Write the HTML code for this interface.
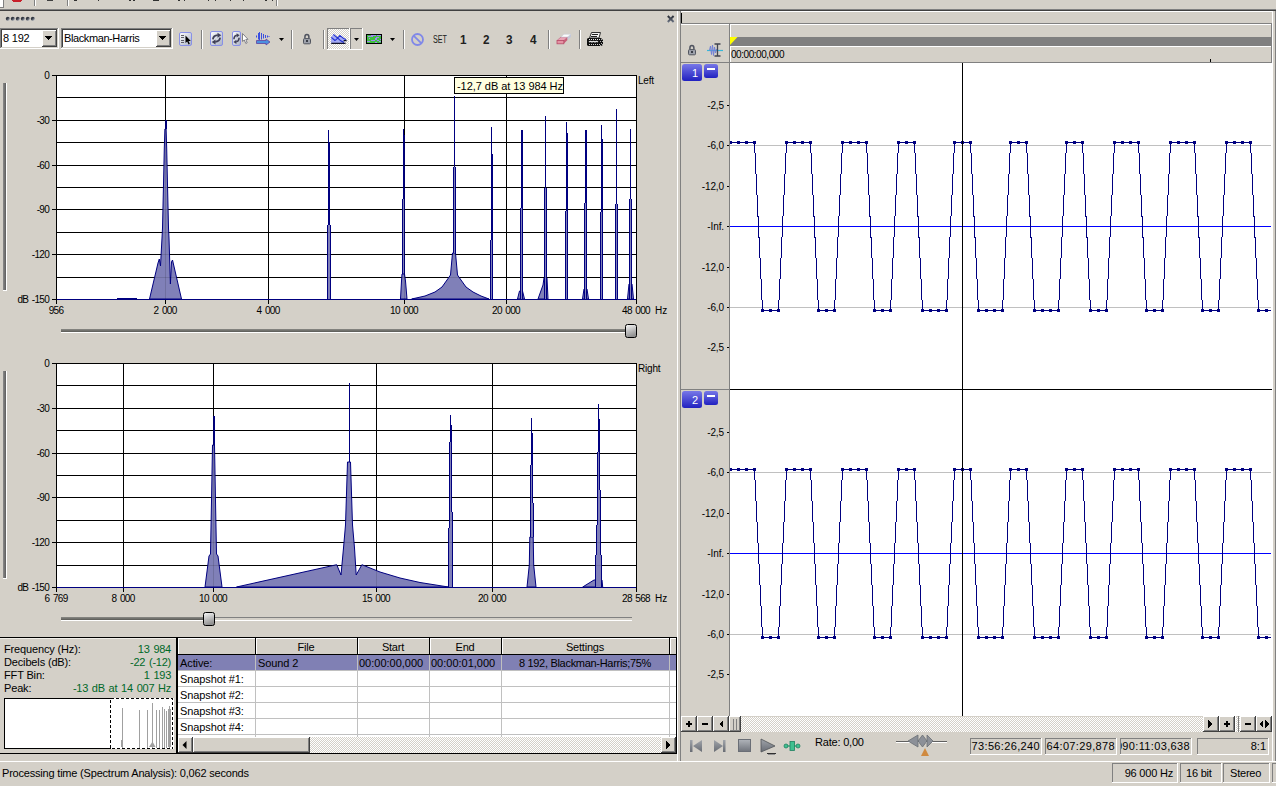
<!DOCTYPE html>
<html><head><meta charset="utf-8"><style>
*{margin:0;padding:0;box-sizing:border-box}
html,body{width:1276px;height:786px;overflow:hidden;background:#d4d0c8;font-family:"Liberation Sans",sans-serif;font-size:11px;color:#000}
.t{position:absolute;white-space:nowrap;line-height:13px}
svg{position:absolute;left:0;top:0}
</style></head><body>
<svg width="1276" height="786" viewBox="0 0 1276 786" shape-rendering="crispEdges">
<defs><linearGradient id="vbarg" x1="0" x2="1" y1="0" y2="0"><stop offset="0" stop-color="#8a8a8a"/><stop offset="1" stop-color="#5e5e5e"/></linearGradient><linearGradient id="trackg" x1="0" x2="0" y1="0" y2="1"><stop offset="0" stop-color="#8a8a86"/><stop offset="1" stop-color="#5a5a56"/></linearGradient><linearGradient id="thumbg" x1="0" x2="0.3" y1="0" y2="1"><stop offset="0" stop-color="#fafafa"/><stop offset="1" stop-color="#909090"/></linearGradient><linearGradient id="chbtn" x1="0" x2="0" y1="0" y2="1"><stop offset="0" stop-color="#7878e8"/><stop offset="1" stop-color="#2020c0"/></linearGradient><pattern id="checker" width="2" height="2" patternUnits="userSpaceOnUse"><rect width="2" height="2" fill="#d4d0c8"/><rect width="1" height="1" fill="#fff"/><rect x="1" y="1" width="1" height="1" fill="#fff"/></pattern><linearGradient id="iconbg" x1="0" x2="1" y1="0" y2="1"><stop offset="0" stop-color="#fff"/><stop offset="1" stop-color="#a8b0c4"/></linearGradient><linearGradient id="tg" x1="0" x2="0" y1="0" y2="1"><stop offset="0" stop-color="#a0a4aa"/><stop offset="1" stop-color="#686c74"/></linearGradient><linearGradient id="tg2" x1="0" x2="0" y1="0" y2="1"><stop offset="0" stop-color="#b0b4ba"/><stop offset="1" stop-color="#70747c"/></linearGradient><linearGradient id="xg" x1="0" x2="0" y1="0" y2="1"><stop offset="0" stop-color="#2a2e36"/><stop offset="1" stop-color="#687080"/></linearGradient><linearGradient id="dotg" x1="0" y1="0" x2="1" y2="1"><stop offset="0" stop-color="#20242c"/><stop offset="0.45" stop-color="#3a404c"/><stop offset="1" stop-color="#c8d0dc"/></linearGradient></defs>
<rect x="0" y="0" width="3" height="7" fill="#fff" />
<rect x="0" y="7" width="4" height="1" fill="#808080" />
<rect x="3" y="0" width="1" height="8" fill="#808080" />
<path d="M12 0 L22 0 L21 2 L13 2 Z" fill="#c8202a"/>
<rect x="34" y="0" width="1" height="6" fill="#808080" />
<rect x="35" y="0" width="1" height="6" fill="#fff" />
<rect x="67" y="0" width="1" height="6" fill="#808080" />
<rect x="68" y="0" width="1" height="6" fill="#fff" />
<rect x="276" y="0" width="1" height="6" fill="#808080" />
<rect x="277" y="0" width="1" height="6" fill="#fff" />
<rect x="47" y="0" width="6" height="1" fill="#404040"/>
<rect x="74" y="0" width="2" height="1" fill="#303030" />
<rect x="76" y="0" width="1" height="1" fill="#303030" />
<rect x="98" y="0" width="1" height="1" fill="#303030" />
<rect x="129" y="0" width="2" height="1" fill="#303030" />
<rect x="133" y="0" width="2" height="1" fill="#303030" />
<rect x="153" y="0" width="6" height="1" fill="#303030" />
<rect x="178" y="0" width="2" height="1" fill="#303030" />
<rect x="184" y="0" width="1" height="1" fill="#303030" />
<rect x="208" y="0" width="1" height="1" fill="#303030" />
<rect x="215" y="0" width="1" height="1" fill="#303030" />
<rect x="230" y="0" width="1" height="1" fill="#303030" />
<rect x="243" y="0" width="1" height="1" fill="#303030" />
<rect x="265" y="0" width="2" height="1" fill="#303030" />
<rect x="272" y="0" width="1" height="1" fill="#303030" />
<rect x="0" y="9" width="1276" height="1" fill="#808080" />
<rect x="0" y="10" width="1276" height="1" fill="#404040" />
<circle cx="7.8" cy="18.8" r="2" fill="url(#dotg)" shape-rendering="auto"/>
<circle cx="12.8" cy="18.8" r="2" fill="url(#dotg)" shape-rendering="auto"/>
<circle cx="17.8" cy="18.8" r="2" fill="url(#dotg)" shape-rendering="auto"/>
<circle cx="22.8" cy="18.8" r="2" fill="url(#dotg)" shape-rendering="auto"/>
<circle cx="27.8" cy="18.8" r="2" fill="url(#dotg)" shape-rendering="auto"/>
<circle cx="32.8" cy="18.8" r="2" fill="url(#dotg)" shape-rendering="auto"/>
<path d="M667.8 16 L673.6 22 M673.6 16 L667.8 22" stroke="url(#xg)" stroke-width="1.9" shape-rendering="auto"/>
<rect x="0" y="28" width="59" height="21" fill="#fff" />
<rect x="0" y="28" width="59" height="1" fill="#808080" />
<rect x="0" y="28" width="1" height="21" fill="#808080" />
<rect x="1" y="29" width="57" height="1" fill="#404040" />
<rect x="1" y="29" width="1" height="19" fill="#404040" />
<rect x="0" y="48" width="59" height="1" fill="#fff" />
<rect x="58" y="28" width="1" height="21" fill="#fff" />
<rect x="1" y="47" width="57" height="1" fill="#d4d0c8" />
<rect x="57" y="29" width="1" height="19" fill="#d4d0c8" />
<rect x="42" y="30" width="15" height="17" fill="#d4d0c8" />
<rect x="42" y="30" width="15" height="1" fill="#fff" />
<rect x="42" y="30" width="1" height="17" fill="#fff" />
<rect x="42" y="46" width="15" height="1" fill="#404040" />
<rect x="56" y="30" width="1" height="17" fill="#404040" />
<rect x="43" y="45" width="13" height="1" fill="#808080" />
<rect x="55" y="31" width="1" height="15" fill="#808080" />
<path d="M45 36 L52 36 L48.5 40 Z" fill="#000"/>
<rect x="61" y="28" width="112" height="21" fill="#fff" />
<rect x="61" y="28" width="112" height="1" fill="#808080" />
<rect x="61" y="28" width="1" height="21" fill="#808080" />
<rect x="62" y="29" width="110" height="1" fill="#404040" />
<rect x="62" y="29" width="1" height="19" fill="#404040" />
<rect x="61" y="48" width="112" height="1" fill="#fff" />
<rect x="172" y="28" width="1" height="21" fill="#fff" />
<rect x="62" y="47" width="110" height="1" fill="#d4d0c8" />
<rect x="171" y="29" width="1" height="19" fill="#d4d0c8" />
<rect x="156" y="30" width="15" height="17" fill="#d4d0c8" />
<rect x="156" y="30" width="15" height="1" fill="#fff" />
<rect x="156" y="30" width="1" height="17" fill="#fff" />
<rect x="156" y="46" width="15" height="1" fill="#404040" />
<rect x="170" y="30" width="1" height="17" fill="#404040" />
<rect x="157" y="45" width="13" height="1" fill="#808080" />
<rect x="169" y="31" width="1" height="15" fill="#808080" />
<path d="M159 36 L166 36 L162.5 40 Z" fill="#000"/>
<rect x="201" y="30" width="1" height="19" fill="#808080" />
<rect x="202" y="30" width="1" height="19" fill="#fff" />
<rect x="291" y="30" width="1" height="19" fill="#808080" />
<rect x="292" y="30" width="1" height="19" fill="#fff" />
<rect x="323" y="30" width="1" height="19" fill="#808080" />
<rect x="324" y="30" width="1" height="19" fill="#fff" />
<rect x="403" y="30" width="1" height="19" fill="#808080" />
<rect x="404" y="30" width="1" height="19" fill="#fff" />
<rect x="548" y="30" width="1" height="19" fill="#808080" />
<rect x="549" y="30" width="1" height="19" fill="#fff" />
<rect x="579" y="30" width="1" height="19" fill="#808080" />
<rect x="580" y="30" width="1" height="19" fill="#fff" />
<rect x="56" y="75" width="580" height="224" fill="#fff" />
<rect x="56" y="97" width="580" height="1" fill="#000" />
<rect x="56" y="120" width="580" height="1" fill="#000" />
<rect x="56" y="142" width="580" height="1" fill="#000" />
<rect x="56" y="165" width="580" height="1" fill="#000" />
<rect x="56" y="187" width="580" height="1" fill="#000" />
<rect x="56" y="209" width="580" height="1" fill="#000" />
<rect x="56" y="232" width="580" height="1" fill="#000" />
<rect x="56" y="254" width="580" height="1" fill="#000" />
<rect x="56" y="277" width="580" height="1" fill="#000" />
<rect x="165" y="75" width="1" height="224" fill="#000" />
<rect x="268" y="75" width="1" height="224" fill="#000" />
<rect x="404" y="75" width="1" height="224" fill="#000" />
<rect x="506" y="75" width="1" height="224" fill="#000" />
<polygon points="149.5,299.0 158.0,263.0 159.3,259.0 160.5,266.0 162.0,238.0 162.5,228.0 163.8,171.0 164.3,148.0 164.9,129.0 166.1,129.0 166.7,148.0 167.2,171.0 168.5,228.0 169.0,238.0 170.4,284.0 171.5,262.0 172.5,260.0 181.5,299.0" fill="#8080b8" stroke="#000080" stroke-width="1" shape-rendering="auto"/>
<rect x="165" y="120" width="2" height="9" fill="#000080" />
<rect x="165" y="120" width="2" height="1" fill="#000080" />
<rect x="328" y="130" width="1" height="12" fill="#000080" />
<rect x="328" y="130" width="1" height="1" fill="#000080" />
<rect x="328" y="142" width="2" height="83" fill="#000080" />
<rect x="329" y="142" width="1" height="1" fill="#000080" />
<rect x="327" y="225" width="4" height="74" fill="#8080b8" />
<rect x="327" y="225" width="1" height="74" fill="#000080" />
<rect x="330" y="225" width="1" height="74" fill="#000080" />
<rect x="327" y="225" width="1" height="1" fill="#000080" />
<rect x="330" y="225" width="1" height="1" fill="#000080" />
<rect x="403" y="129" width="1" height="6" fill="#000080" />
<rect x="403" y="129" width="1" height="1" fill="#000080" />
<rect x="403" y="135" width="2" height="64" fill="#000080" />
<rect x="404" y="135" width="1" height="1" fill="#000080" />
<rect x="402" y="199" width="3" height="75" fill="#8080b8" />
<rect x="402" y="199" width="1" height="75" fill="#000080" />
<rect x="404" y="199" width="1" height="75" fill="#000080" />
<rect x="402" y="199" width="1" height="1" fill="#000080" />
<polygon points="400.5,299.0 401.5,281.0 402.0,274.0 404.5,274.0 405.5,281.0 407.0,299.0" fill="#8080b8" stroke="#000080" stroke-width="1" shape-rendering="auto"/>
<polygon points="411.7,299.0 425.0,296.0 435.0,292.0 442.0,287.0 447.0,280.0 450.5,275.0 452.5,253.0 455.5,253.0 457.5,275.0 461.0,280.0 466.0,287.0 473.0,292.0 481.0,296.0 489.0,299.0" fill="#8080b8" stroke="#000080" stroke-width="1" shape-rendering="auto"/>
<rect x="454" y="96" width="1" height="71" fill="#000080" />
<rect x="454" y="96" width="1" height="1" fill="#000080" />
<rect x="453" y="167" width="3" height="86" fill="#8080b8" />
<rect x="453" y="167" width="1" height="86" fill="#000080" />
<rect x="455" y="167" width="1" height="86" fill="#000080" />
<rect x="453" y="167" width="1" height="1" fill="#000080" />
<rect x="455" y="167" width="1" height="1" fill="#000080" />
<rect x="491" y="127" width="1" height="27" fill="#000080" />
<rect x="491" y="127" width="1" height="1" fill="#000080" />
<rect x="491" y="154" width="2" height="86" fill="#000080" />
<rect x="492" y="154" width="1" height="1" fill="#000080" />
<rect x="490" y="240" width="3" height="59" fill="#8080b8" />
<rect x="490" y="240" width="1" height="59" fill="#000080" />
<rect x="492" y="240" width="1" height="59" fill="#000080" />
<rect x="490" y="240" width="1" height="1" fill="#000080" />
<polygon points="517.5,299.0 519.5,291.0 522.5,291.0 524.5,299.0" fill="#8080b8" stroke="#000080" stroke-width="1" shape-rendering="auto"/>
<rect x="521" y="130" width="2" height="78" fill="#000080" />
<rect x="521" y="130" width="2" height="1" fill="#000080" />
<rect x="520" y="208" width="3" height="91" fill="#8080b8" />
<rect x="520" y="208" width="1" height="91" fill="#000080" />
<rect x="522" y="208" width="1" height="91" fill="#000080" />
<rect x="520" y="208" width="1" height="1" fill="#000080" />
<polygon points="538.0,299.0 543.0,285.0 544.0,278.0 547.0,278.0 548.0,299.0" fill="#8080b8" stroke="#000080" stroke-width="1" shape-rendering="auto"/>
<rect x="545" y="116" width="1" height="72" fill="#000080" />
<rect x="545" y="116" width="1" height="1" fill="#000080" />
<rect x="544" y="188" width="3" height="90" fill="#8080b8" />
<rect x="544" y="188" width="1" height="90" fill="#000080" />
<rect x="546" y="188" width="1" height="90" fill="#000080" />
<rect x="544" y="188" width="1" height="1" fill="#000080" />
<rect x="546" y="188" width="1" height="1" fill="#000080" />
<rect x="544" y="278" width="3" height="21" fill="#8080b8" />
<rect x="544" y="278" width="1" height="21" fill="#000080" />
<rect x="546" y="278" width="1" height="21" fill="#000080" />
<rect x="566" y="122" width="1" height="11" fill="#000080" />
<rect x="566" y="122" width="1" height="1" fill="#000080" />
<rect x="566" y="133" width="2" height="78" fill="#000080" />
<rect x="567" y="133" width="1" height="1" fill="#000080" />
<rect x="565" y="211" width="3" height="88" fill="#8080b8" />
<rect x="565" y="211" width="1" height="88" fill="#000080" />
<rect x="567" y="211" width="1" height="88" fill="#000080" />
<rect x="565" y="211" width="1" height="1" fill="#000080" />
<polygon points="582.5,299.0 584.0,289.0 587.0,289.0 588.5,299.0" fill="#8080b8" stroke="#000080" stroke-width="1" shape-rendering="auto"/>
<rect x="585" y="130" width="2" height="73" fill="#000080" />
<rect x="585" y="130" width="2" height="1" fill="#000080" />
<rect x="584" y="203" width="3" height="96" fill="#8080b8" />
<rect x="584" y="203" width="1" height="96" fill="#000080" />
<rect x="586" y="203" width="1" height="96" fill="#000080" />
<rect x="584" y="203" width="1" height="1" fill="#000080" />
<rect x="601" y="125" width="1" height="14" fill="#000080" />
<rect x="601" y="125" width="1" height="1" fill="#000080" />
<rect x="601" y="139" width="2" height="73" fill="#000080" />
<rect x="602" y="139" width="1" height="1" fill="#000080" />
<rect x="600" y="212" width="3" height="87" fill="#8080b8" />
<rect x="600" y="212" width="1" height="87" fill="#000080" />
<rect x="602" y="212" width="1" height="87" fill="#000080" />
<rect x="600" y="212" width="1" height="1" fill="#000080" />
<rect x="616" y="109" width="1" height="95" fill="#000080" />
<rect x="616" y="109" width="1" height="1" fill="#000080" />
<rect x="615" y="204" width="3" height="95" fill="#8080b8" />
<rect x="615" y="204" width="1" height="95" fill="#000080" />
<rect x="617" y="204" width="1" height="95" fill="#000080" />
<rect x="615" y="204" width="1" height="1" fill="#000080" />
<rect x="617" y="204" width="1" height="1" fill="#000080" />
<polygon points="627.5,299.0 629.0,284.0 632.0,284.0 633.5,299.0" fill="#8080b8" stroke="#000080" stroke-width="1" shape-rendering="auto"/>
<rect x="630" y="129" width="1" height="70" fill="#000080" />
<rect x="630" y="129" width="1" height="1" fill="#000080" />
<rect x="629" y="199" width="3" height="100" fill="#8080b8" />
<rect x="629" y="199" width="1" height="100" fill="#000080" />
<rect x="631" y="199" width="1" height="100" fill="#000080" />
<rect x="629" y="199" width="1" height="1" fill="#000080" />
<rect x="631" y="199" width="1" height="1" fill="#000080" />
<rect x="117" y="298" width="20" height="1" fill="#000080" />
<rect x="56" y="97" width="580" height="1" fill="#000" fill-opacity="0.13"/>
<rect x="56" y="120" width="580" height="1" fill="#000" fill-opacity="0.13"/>
<rect x="56" y="142" width="580" height="1" fill="#000" fill-opacity="0.13"/>
<rect x="56" y="165" width="580" height="1" fill="#000" fill-opacity="0.13"/>
<rect x="56" y="187" width="580" height="1" fill="#000" fill-opacity="0.13"/>
<rect x="56" y="209" width="580" height="1" fill="#000" fill-opacity="0.13"/>
<rect x="56" y="232" width="580" height="1" fill="#000" fill-opacity="0.13"/>
<rect x="56" y="254" width="580" height="1" fill="#000" fill-opacity="0.13"/>
<rect x="56" y="277" width="580" height="1" fill="#000" fill-opacity="0.13"/>
<rect x="165" y="75" width="1" height="224" fill="#000" fill-opacity="0.13"/>
<rect x="268" y="75" width="1" height="224" fill="#000" fill-opacity="0.13"/>
<rect x="404" y="75" width="1" height="224" fill="#000" fill-opacity="0.13"/>
<rect x="506" y="75" width="1" height="224" fill="#000" fill-opacity="0.13"/>
<rect x="56" y="75" width="581" height="1" fill="#000" />
<rect x="56" y="75" width="1" height="229" fill="#000" />
<rect x="636" y="75" width="1" height="229" fill="#000" />
<rect x="57" y="299" width="579" height="1" fill="#000080" />
<rect x="165" y="300" width="1" height="4" fill="#000" />
<rect x="268" y="300" width="1" height="4" fill="#000" />
<rect x="404" y="300" width="1" height="4" fill="#000" />
<rect x="506" y="300" width="1" height="4" fill="#000" />
<rect x="52" y="75" width="4" height="1" fill="#000" />
<rect x="52" y="120" width="4" height="1" fill="#000" />
<rect x="52" y="165" width="4" height="1" fill="#000" />
<rect x="52" y="209" width="4" height="1" fill="#000" />
<rect x="52" y="254" width="4" height="1" fill="#000" />
<rect x="52" y="299" width="4" height="1" fill="#000" />
<rect x="56" y="363" width="580" height="224" fill="#fff" />
<rect x="56" y="385" width="580" height="1" fill="#000" />
<rect x="56" y="408" width="580" height="1" fill="#000" />
<rect x="56" y="430" width="580" height="1" fill="#000" />
<rect x="56" y="453" width="580" height="1" fill="#000" />
<rect x="56" y="475" width="580" height="1" fill="#000" />
<rect x="56" y="497" width="580" height="1" fill="#000" />
<rect x="56" y="520" width="580" height="1" fill="#000" />
<rect x="56" y="542" width="580" height="1" fill="#000" />
<rect x="56" y="565" width="580" height="1" fill="#000" />
<rect x="123" y="363" width="1" height="224" fill="#000" />
<rect x="213" y="363" width="1" height="224" fill="#000" />
<rect x="376" y="363" width="1" height="224" fill="#000" />
<rect x="492" y="363" width="1" height="224" fill="#000" />
<polygon points="205.0,587.0 209.0,556.0 210.5,554.0 211.5,501.0 212.5,445.0 214.5,445.0 215.5,501.0 216.5,554.0 218.0,556.0 222.0,587.0" fill="#8080b8" stroke="#000080" stroke-width="1" shape-rendering="auto"/>
<rect x="213" y="416" width="2" height="29" fill="#000080" />
<rect x="213" y="416" width="2" height="1" fill="#000080" />
<polygon points="236.5,587.0 336.7,564.7 341.0,575.0 343.5,548.0 345.5,525.0 347.5,462.0 350.5,462.0 352.5,525.0 354.5,548.0 356.2,575.0 361.9,564.7 380.0,572.0 400.0,578.0 420.0,582.5 448.4,587.0" fill="#8080b8" stroke="#000080" stroke-width="1" shape-rendering="auto"/>
<rect x="349" y="383" width="1" height="79" fill="#000080" />
<rect x="349" y="383" width="1" height="1" fill="#000080" />
<rect x="450" y="415" width="1" height="10" fill="#000080" />
<rect x="450" y="415" width="1" height="1" fill="#000080" />
<rect x="450" y="425" width="2" height="17" fill="#000080" />
<rect x="451" y="425" width="1" height="1" fill="#000080" />
<rect x="449" y="442" width="3" height="70" fill="#8080b8" />
<rect x="449" y="442" width="1" height="70" fill="#000080" />
<rect x="451" y="442" width="1" height="70" fill="#000080" />
<rect x="449" y="442" width="1" height="1" fill="#000080" />
<rect x="449" y="512" width="4" height="16" fill="#8080b8" />
<rect x="449" y="512" width="1" height="16" fill="#000080" />
<rect x="452" y="512" width="1" height="16" fill="#000080" />
<rect x="452" y="512" width="1" height="1" fill="#000080" />
<rect x="448" y="528" width="5" height="59" fill="#8080b8" />
<rect x="448" y="528" width="1" height="59" fill="#000080" />
<rect x="452" y="528" width="1" height="59" fill="#000080" />
<rect x="448" y="528" width="1" height="1" fill="#000080" />
<polygon points="527.0,587.0 529.3,565.0 529.8,537.0 533.2,537.0 533.7,565.0 536.0,587.0" fill="#8080b8" stroke="#000080" stroke-width="1" shape-rendering="auto"/>
<rect x="531" y="418" width="1" height="15" fill="#000080" />
<rect x="531" y="418" width="1" height="1" fill="#000080" />
<rect x="531" y="433" width="2" height="32" fill="#000080" />
<rect x="532" y="433" width="1" height="1" fill="#000080" />
<rect x="530" y="465" width="3" height="38" fill="#8080b8" />
<rect x="530" y="465" width="1" height="38" fill="#000080" />
<rect x="532" y="465" width="1" height="38" fill="#000080" />
<rect x="530" y="465" width="1" height="1" fill="#000080" />
<rect x="530" y="503" width="4" height="34" fill="#8080b8" />
<rect x="530" y="503" width="1" height="34" fill="#000080" />
<rect x="533" y="503" width="1" height="34" fill="#000080" />
<rect x="533" y="503" width="1" height="1" fill="#000080" />
<polygon points="582.7,587.0 594.0,580.0 602.0,580.0 602.7,587.0" fill="#8080b8" stroke="#000080" stroke-width="1" shape-rendering="auto"/>
<rect x="598" y="404" width="1" height="15" fill="#000080" />
<rect x="598" y="404" width="1" height="1" fill="#000080" />
<rect x="598" y="419" width="2" height="33" fill="#000080" />
<rect x="599" y="419" width="1" height="1" fill="#000080" />
<rect x="597" y="452" width="3" height="38" fill="#8080b8" />
<rect x="597" y="452" width="1" height="38" fill="#000080" />
<rect x="599" y="452" width="1" height="38" fill="#000080" />
<rect x="597" y="452" width="1" height="1" fill="#000080" />
<rect x="597" y="490" width="4" height="35" fill="#8080b8" />
<rect x="597" y="490" width="1" height="35" fill="#000080" />
<rect x="600" y="490" width="1" height="35" fill="#000080" />
<rect x="600" y="490" width="1" height="1" fill="#000080" />
<rect x="596" y="525" width="5" height="30" fill="#8080b8" />
<rect x="596" y="525" width="1" height="30" fill="#000080" />
<rect x="600" y="525" width="1" height="30" fill="#000080" />
<rect x="596" y="525" width="1" height="1" fill="#000080" />
<rect x="595" y="555" width="7" height="25" fill="#8080b8" />
<rect x="595" y="555" width="1" height="25" fill="#000080" />
<rect x="601" y="555" width="1" height="25" fill="#000080" />
<rect x="595" y="555" width="1" height="1" fill="#000080" />
<rect x="601" y="555" width="1" height="1" fill="#000080" />
<rect x="595" y="580" width="7" height="7" fill="#8080b8" />
<rect x="595" y="580" width="1" height="7" fill="#000080" />
<rect x="601" y="580" width="1" height="7" fill="#000080" />
<rect x="56" y="385" width="580" height="1" fill="#000" fill-opacity="0.13"/>
<rect x="56" y="408" width="580" height="1" fill="#000" fill-opacity="0.13"/>
<rect x="56" y="430" width="580" height="1" fill="#000" fill-opacity="0.13"/>
<rect x="56" y="453" width="580" height="1" fill="#000" fill-opacity="0.13"/>
<rect x="56" y="475" width="580" height="1" fill="#000" fill-opacity="0.13"/>
<rect x="56" y="497" width="580" height="1" fill="#000" fill-opacity="0.13"/>
<rect x="56" y="520" width="580" height="1" fill="#000" fill-opacity="0.13"/>
<rect x="56" y="542" width="580" height="1" fill="#000" fill-opacity="0.13"/>
<rect x="56" y="565" width="580" height="1" fill="#000" fill-opacity="0.13"/>
<rect x="123" y="363" width="1" height="224" fill="#000" fill-opacity="0.13"/>
<rect x="213" y="363" width="1" height="224" fill="#000" fill-opacity="0.13"/>
<rect x="376" y="363" width="1" height="224" fill="#000" fill-opacity="0.13"/>
<rect x="492" y="363" width="1" height="224" fill="#000" fill-opacity="0.13"/>
<rect x="56" y="363" width="581" height="1" fill="#000" />
<rect x="56" y="363" width="1" height="229" fill="#000" />
<rect x="636" y="363" width="1" height="229" fill="#000" />
<rect x="57" y="587" width="579" height="1" fill="#000080" />
<rect x="123" y="588" width="1" height="4" fill="#000" />
<rect x="213" y="588" width="1" height="4" fill="#000" />
<rect x="376" y="588" width="1" height="4" fill="#000" />
<rect x="492" y="588" width="1" height="4" fill="#000" />
<rect x="52" y="363" width="4" height="1" fill="#000" />
<rect x="52" y="408" width="4" height="1" fill="#000" />
<rect x="52" y="453" width="4" height="1" fill="#000" />
<rect x="52" y="497" width="4" height="1" fill="#000" />
<rect x="52" y="542" width="4" height="1" fill="#000" />
<rect x="52" y="587" width="4" height="1" fill="#000" />
<rect x="3" y="83" width="3" height="207" fill="url(#vbarg)"/>
<rect x="6" y="83" width="1" height="208" fill="#fff" />
<rect x="3" y="290" width="4" height="1" fill="#fff" />
<rect x="3" y="371" width="3" height="207" fill="url(#vbarg)"/>
<rect x="6" y="371" width="1" height="208" fill="#fff" />
<rect x="3" y="578" width="4" height="1" fill="#fff" />
<rect x="61" y="329" width="564" height="3" fill="url(#trackg)"/>
<rect x="61" y="332" width="565" height="1" fill="#fff" />
<rect x="625.5" y="324.5" width="11" height="13" rx="2" fill="url(#thumbg)" stroke="#000" stroke-width="1" shape-rendering="auto"/>
<rect x="61" y="617" width="142" height="3" fill="url(#trackg)"/>
<rect x="61" y="620" width="143" height="1" fill="#fff" />
<rect x="215" y="617" width="417" height="1" fill="#808080" />
<rect x="215" y="620" width="417" height="1" fill="#fff" />
<rect x="203.5" y="612.5" width="11" height="13" rx="2" fill="url(#thumbg)" stroke="#000" stroke-width="1" shape-rendering="auto"/>
<rect x="0" y="637" width="678" height="1" fill="#000" />
<rect x="0" y="638" width="176" height="1" fill="#f0eee8" />
<rect x="176" y="637" width="1" height="117" fill="#000" />
<rect x="0" y="753" width="678" height="1" fill="#000" />
<rect x="4" y="698" width="170" height="51" fill="#fff" />
<rect x="4" y="698" width="107" height="1" fill="#000" />
<rect x="4" y="748" width="107" height="1" fill="#000" />
<rect x="4" y="698" width="1" height="51" fill="#000" />
<rect x="110.5" y="698.5" width="62" height="50" fill="none" stroke="#000" stroke-width="1" stroke-dasharray="3,2"/>
<rect x="122" y="708" width="1" height="40" fill="#a0a0a0" />
<rect x="139" y="710" width="1" height="38" fill="#a0a0a0" />
<rect x="147" y="710" width="1" height="38" fill="#a0a0a0" />
<rect x="152" y="703" width="1" height="45" fill="#a0a0a0" />
<rect x="156" y="710" width="1" height="38" fill="#a0a0a0" />
<rect x="159" y="710" width="1" height="38" fill="#a0a0a0" />
<rect x="162" y="707" width="1" height="41" fill="#a0a0a0" />
<rect x="164" y="709" width="1" height="39" fill="#a0a0a0" />
<rect x="166" y="711" width="1" height="37" fill="#a0a0a0" />
<rect x="169" y="706" width="1" height="42" fill="#a0a0a0" />
<rect x="121" y="740" width="2" height="7" fill="#a0a0a0" />
<path d="M149 747 L152.5 741.5 L155.5 747 Z" fill="#a0a0a0" shape-rendering="auto"/>
<rect x="168" y="709" width="3" height="38" fill="#a0a0a0" />
<rect x="178" y="638" width="498" height="115" fill="#fff" />
<rect x="177" y="637" width="500" height="1" fill="#000" />
<rect x="177" y="637" width="1" height="117" fill="#000" />
<rect x="676" y="637" width="1" height="117" fill="#000" />
<rect x="178" y="638" width="498" height="16" fill="#d4d0c8" />
<rect x="178" y="654" width="498" height="1" fill="#000" />
<rect x="178" y="638" width="1" height="16" fill="#fff" />
<rect x="178" y="638" width="77" height="1" fill="#fff" />
<rect x="256" y="638" width="1" height="16" fill="#fff" />
<rect x="256" y="638" width="101" height="1" fill="#fff" />
<rect x="255" y="638" width="1" height="17" fill="#000" />
<rect x="358" y="638" width="1" height="16" fill="#fff" />
<rect x="358" y="638" width="71" height="1" fill="#fff" />
<rect x="357" y="638" width="1" height="17" fill="#000" />
<rect x="430" y="638" width="1" height="16" fill="#fff" />
<rect x="430" y="638" width="71" height="1" fill="#fff" />
<rect x="429" y="638" width="1" height="17" fill="#000" />
<rect x="502" y="638" width="1" height="16" fill="#fff" />
<rect x="502" y="638" width="167" height="1" fill="#fff" />
<rect x="501" y="638" width="1" height="17" fill="#000" />
<rect x="670" y="638" width="1" height="16" fill="#fff" />
<rect x="670" y="638" width="6" height="1" fill="#fff" />
<rect x="669" y="638" width="1" height="17" fill="#000" />
<rect x="178" y="655" width="498" height="15" fill="#8080b4" />
<rect x="178" y="670" width="498" height="1" fill="#c0c0c0" />
<rect x="178" y="686" width="498" height="1" fill="#c0c0c0" />
<rect x="178" y="702" width="498" height="1" fill="#c0c0c0" />
<rect x="178" y="718" width="498" height="1" fill="#c0c0c0" />
<rect x="178" y="734" width="498" height="1" fill="#c0c0c0" />
<rect x="255" y="655" width="1" height="82" fill="#c0c0c0" />
<rect x="357" y="655" width="1" height="82" fill="#c0c0c0" />
<rect x="429" y="655" width="1" height="82" fill="#c0c0c0" />
<rect x="501" y="655" width="1" height="82" fill="#c0c0c0" />
<rect x="669" y="655" width="1" height="82" fill="#c0c0c0" />
<rect x="178" y="737" width="498" height="16" fill="url(#checker)"/>
<rect x="178" y="737" width="15" height="16" fill="#d4d0c8" />
<rect x="178" y="737" width="15" height="1" fill="#fff" />
<rect x="178" y="737" width="1" height="16" fill="#fff" />
<rect x="178" y="752" width="15" height="1" fill="#404040" />
<rect x="192" y="737" width="1" height="16" fill="#404040" />
<rect x="179" y="751" width="13" height="1" fill="#808080" />
<rect x="191" y="738" width="1" height="14" fill="#808080" />
<path d="M186.5 741 L186.5 749 L182.5 745 Z" fill="#000" shape-rendering="auto"/>
<rect x="193" y="737" width="117" height="16" fill="#d4d0c8" />
<rect x="193" y="737" width="117" height="1" fill="#fff" />
<rect x="193" y="737" width="1" height="16" fill="#fff" />
<rect x="193" y="752" width="117" height="1" fill="#404040" />
<rect x="309" y="737" width="1" height="16" fill="#404040" />
<rect x="194" y="751" width="115" height="1" fill="#808080" />
<rect x="308" y="738" width="1" height="14" fill="#808080" />
<rect x="661" y="737" width="15" height="16" fill="#d4d0c8" />
<rect x="661" y="737" width="15" height="1" fill="#fff" />
<rect x="661" y="737" width="1" height="16" fill="#fff" />
<rect x="661" y="752" width="15" height="1" fill="#404040" />
<rect x="675" y="737" width="1" height="16" fill="#404040" />
<rect x="662" y="751" width="13" height="1" fill="#808080" />
<rect x="674" y="738" width="1" height="14" fill="#808080" />
<path d="M666 741 L666 749 L670 745 Z" fill="#000"/>
<rect x="677" y="11" width="1" height="750" fill="#fff" />
<rect x="680" y="11" width="1" height="750" fill="#808080" />
<rect x="0" y="761" width="1276" height="1" fill="#fff" />
<rect x="681" y="11" width="592" height="1" fill="#fff" />
<rect x="1272" y="11" width="1" height="750" fill="#fff" />
<rect x="1275" y="11" width="1" height="750" fill="#808080" />
<rect x="681" y="23" width="591" height="1" fill="#808080" />
<rect x="681" y="13" width="1" height="10" fill="#000" />
<rect x="681" y="24" width="48" height="1" fill="#fff" />
<rect x="729" y="24" width="1" height="693" fill="#808080" />
<rect x="681" y="62" width="48" height="1" fill="#808080" />
<rect x="730" y="24" width="542" height="1" fill="#fff" />
<rect x="730" y="24" width="1" height="39" fill="#fff" />
<rect x="1271" y="23" width="1" height="40" fill="#808080" />
<rect x="730" y="37" width="541" height="9" fill="#808080" />
<rect x="730" y="46" width="541" height="1" fill="#fff" />
<path d="M730 37 L737.5 37 L730 45 Z" fill="#ffff00" shape-rendering="auto"/>
<rect x="730" y="62" width="542" height="1" fill="#808080" />
<rect x="1210" y="59" width="1" height="3" fill="#000" />
<rect x="730" y="63" width="541" height="653" fill="#fff" />
<rect x="730" y="145" width="541" height="1" fill="#c0c0c0" />
<rect x="730" y="307" width="541" height="1" fill="#c0c0c0" />
<rect x="730" y="226" width="541" height="1" fill="#0000ff" />
<rect x="727" y="105" width="2" height="1" fill="#000" />
<rect x="727" y="145" width="2" height="1" fill="#000" />
<rect x="727" y="186" width="2" height="1" fill="#000" />
<rect x="727" y="226" width="2" height="1" fill="#000" />
<rect x="727" y="267" width="2" height="1" fill="#000" />
<rect x="727" y="307" width="2" height="1" fill="#000" />
<rect x="727" y="347" width="2" height="1" fill="#000" />
<polyline points="730.5,142.5 738.5,142.5 746.5,142.5 754.5,142.5 762.5,310.5 770.5,310.5 778.5,310.5 786.5,142.5 794.5,142.5 802.5,142.5 810.5,142.5 818.5,310.5 826.5,310.5 834.5,310.5 842.5,142.5 850.5,142.5 858.5,142.5 866.5,142.5 874.5,310.5 882.5,310.5 890.5,310.5 898.5,142.5 906.5,142.5 914.5,142.5 922.5,310.5 930.5,310.5 938.5,310.5 946.5,310.5 954.5,142.5 962.5,142.5 970.5,142.5 978.5,310.5 986.5,310.5 994.5,310.5 1002.5,310.5 1010.5,142.5 1018.5,142.5 1026.5,142.5 1034.5,310.5 1042.5,310.5 1050.5,310.5 1058.5,310.5 1066.5,142.5 1074.5,142.5 1082.5,142.5 1090.5,310.5 1098.5,310.5 1106.5,310.5 1114.5,142.5 1122.5,142.5 1130.5,142.5 1138.5,142.5 1146.5,310.5 1154.5,310.5 1162.5,310.5 1170.5,142.5 1178.5,142.5 1186.5,142.5 1194.5,142.5 1202.5,310.5 1210.5,310.5 1218.5,310.5 1226.5,142.5 1234.5,142.5 1242.5,142.5 1250.5,142.5 1258.5,310.5 1266.5,310.5 1274.5,310.5" fill="none" stroke="#000080" stroke-width="1"/>
<rect x="730" y="141" width="2" height="3" fill="#000080" />
<rect x="737" y="141" width="3" height="3" fill="#000080" />
<rect x="745" y="141" width="3" height="3" fill="#000080" />
<rect x="753" y="141" width="3" height="3" fill="#000080" />
<rect x="761" y="309" width="3" height="3" fill="#000080" />
<rect x="769" y="309" width="3" height="3" fill="#000080" />
<rect x="777" y="309" width="3" height="3" fill="#000080" />
<rect x="785" y="141" width="3" height="3" fill="#000080" />
<rect x="793" y="141" width="3" height="3" fill="#000080" />
<rect x="801" y="141" width="3" height="3" fill="#000080" />
<rect x="809" y="141" width="3" height="3" fill="#000080" />
<rect x="817" y="309" width="3" height="3" fill="#000080" />
<rect x="825" y="309" width="3" height="3" fill="#000080" />
<rect x="833" y="309" width="3" height="3" fill="#000080" />
<rect x="841" y="141" width="3" height="3" fill="#000080" />
<rect x="849" y="141" width="3" height="3" fill="#000080" />
<rect x="857" y="141" width="3" height="3" fill="#000080" />
<rect x="865" y="141" width="3" height="3" fill="#000080" />
<rect x="873" y="309" width="3" height="3" fill="#000080" />
<rect x="881" y="309" width="3" height="3" fill="#000080" />
<rect x="889" y="309" width="3" height="3" fill="#000080" />
<rect x="897" y="141" width="3" height="3" fill="#000080" />
<rect x="905" y="141" width="3" height="3" fill="#000080" />
<rect x="913" y="141" width="3" height="3" fill="#000080" />
<rect x="921" y="309" width="3" height="3" fill="#000080" />
<rect x="929" y="309" width="3" height="3" fill="#000080" />
<rect x="937" y="309" width="3" height="3" fill="#000080" />
<rect x="945" y="309" width="3" height="3" fill="#000080" />
<rect x="953" y="141" width="3" height="3" fill="#000080" />
<rect x="961" y="141" width="3" height="3" fill="#000080" />
<rect x="969" y="141" width="3" height="3" fill="#000080" />
<rect x="977" y="309" width="3" height="3" fill="#000080" />
<rect x="985" y="309" width="3" height="3" fill="#000080" />
<rect x="993" y="309" width="3" height="3" fill="#000080" />
<rect x="1001" y="309" width="3" height="3" fill="#000080" />
<rect x="1009" y="141" width="3" height="3" fill="#000080" />
<rect x="1017" y="141" width="3" height="3" fill="#000080" />
<rect x="1025" y="141" width="3" height="3" fill="#000080" />
<rect x="1033" y="309" width="3" height="3" fill="#000080" />
<rect x="1041" y="309" width="3" height="3" fill="#000080" />
<rect x="1049" y="309" width="3" height="3" fill="#000080" />
<rect x="1057" y="309" width="3" height="3" fill="#000080" />
<rect x="1065" y="141" width="3" height="3" fill="#000080" />
<rect x="1073" y="141" width="3" height="3" fill="#000080" />
<rect x="1081" y="141" width="3" height="3" fill="#000080" />
<rect x="1089" y="309" width="3" height="3" fill="#000080" />
<rect x="1097" y="309" width="3" height="3" fill="#000080" />
<rect x="1105" y="309" width="3" height="3" fill="#000080" />
<rect x="1113" y="141" width="3" height="3" fill="#000080" />
<rect x="1121" y="141" width="3" height="3" fill="#000080" />
<rect x="1129" y="141" width="3" height="3" fill="#000080" />
<rect x="1137" y="141" width="3" height="3" fill="#000080" />
<rect x="1145" y="309" width="3" height="3" fill="#000080" />
<rect x="1153" y="309" width="3" height="3" fill="#000080" />
<rect x="1161" y="309" width="3" height="3" fill="#000080" />
<rect x="1169" y="141" width="3" height="3" fill="#000080" />
<rect x="1177" y="141" width="3" height="3" fill="#000080" />
<rect x="1185" y="141" width="3" height="3" fill="#000080" />
<rect x="1193" y="141" width="3" height="3" fill="#000080" />
<rect x="1201" y="309" width="3" height="3" fill="#000080" />
<rect x="1209" y="309" width="3" height="3" fill="#000080" />
<rect x="1217" y="309" width="3" height="3" fill="#000080" />
<rect x="1225" y="141" width="3" height="3" fill="#000080" />
<rect x="1233" y="141" width="3" height="3" fill="#000080" />
<rect x="1241" y="141" width="3" height="3" fill="#000080" />
<rect x="1249" y="141" width="3" height="3" fill="#000080" />
<rect x="1257" y="309" width="3" height="3" fill="#000080" />
<rect x="1265" y="309" width="3" height="3" fill="#000080" />
<rect x="1273" y="309" width="3" height="3" fill="#000080" />
<rect x="682" y="64" width="20" height="17" rx="2.5" fill="url(#chbtn)" shape-rendering="auto"/>
<rect x="704" y="64" width="14" height="14" rx="2.5" fill="url(#chbtn)" shape-rendering="auto"/>
<rect x="707" y="68" width="8" height="2" fill="#fff" />
<rect x="730" y="472" width="541" height="1" fill="#c0c0c0" />
<rect x="730" y="634" width="541" height="1" fill="#c0c0c0" />
<rect x="730" y="553" width="541" height="1" fill="#0000ff" />
<rect x="727" y="432" width="2" height="1" fill="#000" />
<rect x="727" y="472" width="2" height="1" fill="#000" />
<rect x="727" y="513" width="2" height="1" fill="#000" />
<rect x="727" y="553" width="2" height="1" fill="#000" />
<rect x="727" y="594" width="2" height="1" fill="#000" />
<rect x="727" y="634" width="2" height="1" fill="#000" />
<rect x="727" y="674" width="2" height="1" fill="#000" />
<polyline points="730.5,469.5 738.5,469.5 746.5,469.5 754.5,469.5 762.5,637.5 770.5,637.5 778.5,637.5 786.5,469.5 794.5,469.5 802.5,469.5 810.5,469.5 818.5,637.5 826.5,637.5 834.5,637.5 842.5,469.5 850.5,469.5 858.5,469.5 866.5,469.5 874.5,637.5 882.5,637.5 890.5,637.5 898.5,469.5 906.5,469.5 914.5,469.5 922.5,637.5 930.5,637.5 938.5,637.5 946.5,637.5 954.5,469.5 962.5,469.5 970.5,469.5 978.5,637.5 986.5,637.5 994.5,637.5 1002.5,637.5 1010.5,469.5 1018.5,469.5 1026.5,469.5 1034.5,637.5 1042.5,637.5 1050.5,637.5 1058.5,637.5 1066.5,469.5 1074.5,469.5 1082.5,469.5 1090.5,637.5 1098.5,637.5 1106.5,637.5 1114.5,469.5 1122.5,469.5 1130.5,469.5 1138.5,469.5 1146.5,637.5 1154.5,637.5 1162.5,637.5 1170.5,469.5 1178.5,469.5 1186.5,469.5 1194.5,469.5 1202.5,637.5 1210.5,637.5 1218.5,637.5 1226.5,469.5 1234.5,469.5 1242.5,469.5 1250.5,469.5 1258.5,637.5 1266.5,637.5 1274.5,637.5" fill="none" stroke="#000080" stroke-width="1"/>
<rect x="730" y="468" width="2" height="3" fill="#000080" />
<rect x="737" y="468" width="3" height="3" fill="#000080" />
<rect x="745" y="468" width="3" height="3" fill="#000080" />
<rect x="753" y="468" width="3" height="3" fill="#000080" />
<rect x="761" y="636" width="3" height="3" fill="#000080" />
<rect x="769" y="636" width="3" height="3" fill="#000080" />
<rect x="777" y="636" width="3" height="3" fill="#000080" />
<rect x="785" y="468" width="3" height="3" fill="#000080" />
<rect x="793" y="468" width="3" height="3" fill="#000080" />
<rect x="801" y="468" width="3" height="3" fill="#000080" />
<rect x="809" y="468" width="3" height="3" fill="#000080" />
<rect x="817" y="636" width="3" height="3" fill="#000080" />
<rect x="825" y="636" width="3" height="3" fill="#000080" />
<rect x="833" y="636" width="3" height="3" fill="#000080" />
<rect x="841" y="468" width="3" height="3" fill="#000080" />
<rect x="849" y="468" width="3" height="3" fill="#000080" />
<rect x="857" y="468" width="3" height="3" fill="#000080" />
<rect x="865" y="468" width="3" height="3" fill="#000080" />
<rect x="873" y="636" width="3" height="3" fill="#000080" />
<rect x="881" y="636" width="3" height="3" fill="#000080" />
<rect x="889" y="636" width="3" height="3" fill="#000080" />
<rect x="897" y="468" width="3" height="3" fill="#000080" />
<rect x="905" y="468" width="3" height="3" fill="#000080" />
<rect x="913" y="468" width="3" height="3" fill="#000080" />
<rect x="921" y="636" width="3" height="3" fill="#000080" />
<rect x="929" y="636" width="3" height="3" fill="#000080" />
<rect x="937" y="636" width="3" height="3" fill="#000080" />
<rect x="945" y="636" width="3" height="3" fill="#000080" />
<rect x="953" y="468" width="3" height="3" fill="#000080" />
<rect x="961" y="468" width="3" height="3" fill="#000080" />
<rect x="969" y="468" width="3" height="3" fill="#000080" />
<rect x="977" y="636" width="3" height="3" fill="#000080" />
<rect x="985" y="636" width="3" height="3" fill="#000080" />
<rect x="993" y="636" width="3" height="3" fill="#000080" />
<rect x="1001" y="636" width="3" height="3" fill="#000080" />
<rect x="1009" y="468" width="3" height="3" fill="#000080" />
<rect x="1017" y="468" width="3" height="3" fill="#000080" />
<rect x="1025" y="468" width="3" height="3" fill="#000080" />
<rect x="1033" y="636" width="3" height="3" fill="#000080" />
<rect x="1041" y="636" width="3" height="3" fill="#000080" />
<rect x="1049" y="636" width="3" height="3" fill="#000080" />
<rect x="1057" y="636" width="3" height="3" fill="#000080" />
<rect x="1065" y="468" width="3" height="3" fill="#000080" />
<rect x="1073" y="468" width="3" height="3" fill="#000080" />
<rect x="1081" y="468" width="3" height="3" fill="#000080" />
<rect x="1089" y="636" width="3" height="3" fill="#000080" />
<rect x="1097" y="636" width="3" height="3" fill="#000080" />
<rect x="1105" y="636" width="3" height="3" fill="#000080" />
<rect x="1113" y="468" width="3" height="3" fill="#000080" />
<rect x="1121" y="468" width="3" height="3" fill="#000080" />
<rect x="1129" y="468" width="3" height="3" fill="#000080" />
<rect x="1137" y="468" width="3" height="3" fill="#000080" />
<rect x="1145" y="636" width="3" height="3" fill="#000080" />
<rect x="1153" y="636" width="3" height="3" fill="#000080" />
<rect x="1161" y="636" width="3" height="3" fill="#000080" />
<rect x="1169" y="468" width="3" height="3" fill="#000080" />
<rect x="1177" y="468" width="3" height="3" fill="#000080" />
<rect x="1185" y="468" width="3" height="3" fill="#000080" />
<rect x="1193" y="468" width="3" height="3" fill="#000080" />
<rect x="1201" y="636" width="3" height="3" fill="#000080" />
<rect x="1209" y="636" width="3" height="3" fill="#000080" />
<rect x="1217" y="636" width="3" height="3" fill="#000080" />
<rect x="1225" y="468" width="3" height="3" fill="#000080" />
<rect x="1233" y="468" width="3" height="3" fill="#000080" />
<rect x="1241" y="468" width="3" height="3" fill="#000080" />
<rect x="1249" y="468" width="3" height="3" fill="#000080" />
<rect x="1257" y="636" width="3" height="3" fill="#000080" />
<rect x="1265" y="636" width="3" height="3" fill="#000080" />
<rect x="1273" y="636" width="3" height="3" fill="#000080" />
<rect x="682" y="391" width="20" height="17" rx="2.5" fill="url(#chbtn)" shape-rendering="auto"/>
<rect x="704" y="391" width="14" height="14" rx="2.5" fill="url(#chbtn)" shape-rendering="auto"/>
<rect x="707" y="395" width="8" height="2" fill="#fff" />
<rect x="1271" y="63" width="1" height="653" fill="#fff" />
<rect x="1272" y="63" width="4" height="653" fill="#d4d0c8" />
<rect x="1272" y="11" width="1" height="750" fill="#fff" />
<rect x="1275" y="11" width="1" height="750" fill="#808080" />
<rect x="681" y="389" width="48" height="1" fill="#808080" />
<rect x="730" y="389" width="542" height="1" fill="#000" />
<rect x="962" y="63" width="1" height="653" fill="#000" />
<rect x="681" y="716" width="591" height="16" fill="url(#checker)"/>
<rect x="681" y="716" width="591" height="1" fill="#d4d0c8" />
<rect x="681" y="716" width="16" height="16" fill="#d4d0c8" />
<rect x="681" y="716" width="16" height="1" fill="#fff" />
<rect x="681" y="716" width="1" height="16" fill="#fff" />
<rect x="681" y="731" width="16" height="1" fill="#404040" />
<rect x="696" y="716" width="1" height="16" fill="#404040" />
<rect x="682" y="730" width="14" height="1" fill="#808080" />
<rect x="695" y="717" width="1" height="14" fill="#808080" />
<rect x="697" y="716" width="16" height="16" fill="#d4d0c8" />
<rect x="697" y="716" width="16" height="1" fill="#fff" />
<rect x="697" y="716" width="1" height="16" fill="#fff" />
<rect x="697" y="731" width="16" height="1" fill="#404040" />
<rect x="712" y="716" width="1" height="16" fill="#404040" />
<rect x="698" y="730" width="14" height="1" fill="#808080" />
<rect x="711" y="717" width="1" height="14" fill="#808080" />
<rect x="713" y="716" width="16" height="16" fill="#d4d0c8" />
<rect x="713" y="716" width="16" height="1" fill="#fff" />
<rect x="713" y="716" width="1" height="16" fill="#fff" />
<rect x="713" y="731" width="16" height="1" fill="#404040" />
<rect x="728" y="716" width="1" height="16" fill="#404040" />
<rect x="714" y="730" width="14" height="1" fill="#808080" />
<rect x="727" y="717" width="1" height="14" fill="#808080" />
<rect x="1203" y="716" width="16" height="16" fill="#d4d0c8" />
<rect x="1203" y="716" width="16" height="1" fill="#fff" />
<rect x="1203" y="716" width="1" height="16" fill="#fff" />
<rect x="1203" y="731" width="16" height="1" fill="#404040" />
<rect x="1218" y="716" width="1" height="16" fill="#404040" />
<rect x="1204" y="730" width="14" height="1" fill="#808080" />
<rect x="1217" y="717" width="1" height="14" fill="#808080" />
<rect x="1219" y="716" width="16" height="16" fill="#d4d0c8" />
<rect x="1219" y="716" width="16" height="1" fill="#fff" />
<rect x="1219" y="716" width="1" height="16" fill="#fff" />
<rect x="1219" y="731" width="16" height="1" fill="#404040" />
<rect x="1234" y="716" width="1" height="16" fill="#404040" />
<rect x="1220" y="730" width="14" height="1" fill="#808080" />
<rect x="1233" y="717" width="1" height="14" fill="#808080" />
<rect x="1240" y="716" width="16" height="16" fill="#d4d0c8" />
<rect x="1240" y="716" width="16" height="1" fill="#fff" />
<rect x="1240" y="716" width="1" height="16" fill="#fff" />
<rect x="1240" y="731" width="16" height="1" fill="#404040" />
<rect x="1255" y="716" width="1" height="16" fill="#404040" />
<rect x="1241" y="730" width="14" height="1" fill="#808080" />
<rect x="1254" y="717" width="1" height="14" fill="#808080" />
<rect x="1256" y="716" width="16" height="16" fill="#d4d0c8" />
<rect x="1256" y="716" width="16" height="1" fill="#fff" />
<rect x="1256" y="716" width="1" height="16" fill="#fff" />
<rect x="1256" y="731" width="16" height="1" fill="#404040" />
<rect x="1271" y="716" width="1" height="16" fill="#404040" />
<rect x="1257" y="730" width="14" height="1" fill="#808080" />
<rect x="1270" y="717" width="1" height="14" fill="#808080" />
<rect x="729" y="716" width="12" height="16" fill="#d4d0c8" />
<rect x="729" y="716" width="12" height="1" fill="#fff" />
<rect x="729" y="716" width="1" height="16" fill="#fff" />
<rect x="729" y="731" width="12" height="1" fill="#404040" />
<rect x="740" y="716" width="1" height="16" fill="#404040" />
<rect x="730" y="730" width="10" height="1" fill="#808080" />
<rect x="739" y="717" width="1" height="14" fill="#808080" />
<rect x="733" y="719" width="1" height="11" fill="#808080" />
<rect x="736" y="719" width="1" height="11" fill="#808080" />
<rect x="739" y="719" width="1" height="11" fill="#808080" />
<path d="M686 724 H692 M689 721 V727" stroke="#000" stroke-width="2"/>
<path d="M702 724 H708" stroke="#000" stroke-width="2"/>
<path d="M723 720 L723 728 L719 724 Z" fill="#000"/>
<path d="M1208 720 L1208 728 L1212 724 Z" fill="#000"/>
<path d="M1224 724 H1230 M1227 721 V727" stroke="#000" stroke-width="2"/>
<path d="M1245 724 H1251" stroke="#000" stroke-width="2"/>
<path d="M1263 720 L1263 728 L1259 724 Z M1265 720 L1265 728 L1269 724 Z" fill="#000"/>
<rect x="1235" y="716" width="1" height="16" fill="#fff" />
<rect x="1238" y="716" width="1" height="16" fill="#808080" />
<rect x="970" y="738" width="72" height="1" fill="#808080" />
<rect x="970" y="738" width="1" height="17" fill="#808080" />
<rect x="970" y="754" width="72" height="1" fill="#fff" />
<rect x="1041" y="738" width="1" height="17" fill="#fff" />
<rect x="1045" y="738" width="72" height="1" fill="#808080" />
<rect x="1045" y="738" width="1" height="17" fill="#808080" />
<rect x="1045" y="754" width="72" height="1" fill="#fff" />
<rect x="1116" y="738" width="1" height="17" fill="#fff" />
<rect x="1120" y="738" width="72" height="1" fill="#808080" />
<rect x="1120" y="738" width="1" height="17" fill="#808080" />
<rect x="1120" y="754" width="72" height="1" fill="#fff" />
<rect x="1191" y="738" width="1" height="17" fill="#fff" />
<rect x="1197" y="738" width="72" height="1" fill="#808080" />
<rect x="1197" y="738" width="1" height="17" fill="#808080" />
<rect x="1197" y="754" width="72" height="1" fill="#fff" />
<rect x="1268" y="738" width="1" height="17" fill="#fff" />
<rect x="1112" y="763" width="66" height="1" fill="#808080" />
<rect x="1112" y="763" width="1" height="20" fill="#808080" />
<rect x="1112" y="782" width="66" height="1" fill="#fff" />
<rect x="1177" y="763" width="1" height="20" fill="#fff" />
<rect x="1180" y="763" width="42" height="1" fill="#808080" />
<rect x="1180" y="763" width="1" height="20" fill="#808080" />
<rect x="1180" y="782" width="42" height="1" fill="#fff" />
<rect x="1221" y="763" width="1" height="20" fill="#fff" />
<rect x="1223" y="763" width="47" height="1" fill="#808080" />
<rect x="1223" y="763" width="1" height="20" fill="#808080" />
<rect x="1223" y="782" width="47" height="1" fill="#fff" />
<rect x="1269" y="763" width="1" height="20" fill="#fff" />
<rect x="1272" y="763" width="10" height="1" fill="#808080" />
<rect x="1272" y="763" width="1" height="20" fill="#808080" />
<rect x="1272" y="782" width="10" height="1" fill="#fff" />
<rect x="1281" y="763" width="1" height="20" fill="#fff" />
<rect x="179.5" y="32.5" width="12" height="13" rx="1.5" fill="url(#iconbg)" stroke="#8890e8" shape-rendering="auto"/>
<rect x="181" y="35" width="3" height="1" fill="#606068" />
<rect x="181" y="37" width="3" height="1" fill="#606068" />
<rect x="181" y="40" width="3" height="1" fill="#606068" />
<rect x="181" y="42" width="3" height="1" fill="#606068" />
<path d="M185.5 35.5 L185.5 43 L187.2 41.4 L188.6 44.4 L189.8 43.8 L188.5 41 L190.8 41 Z" fill="#000" shape-rendering="auto"/>
<rect x="210.5" y="31.5" width="12" height="14" rx="1.5" fill="url(#iconbg)" stroke="#8890e8" shape-rendering="auto"/>
<path d="M212.9 39.3 Q213.4 35.4 217.8 35.2 M220.1 37.7 Q219.6 41.6 215.2 41.8" fill="none" stroke="#404058" stroke-width="1.8" shape-rendering="auto"/>
<path d="M217.5 32.8 L221.3 35.3 L217.5 37.8 Z M215.5 39.4 L211.7 41.9 L215.5 44.4 Z" fill="#404058" shape-rendering="auto"/>
<rect x="232.5" y="31.5" width="8" height="14" rx="1.5" fill="url(#iconbg)" stroke="#8890e8" shape-rendering="auto"/>
<path d="M233.9 39.3 Q234.2 35.5 236.8 35.3 M239.1 37.7 Q238.8 41.5 236.2 41.7" fill="none" stroke="#404058" stroke-width="1.6" shape-rendering="auto"/>
<path d="M236.6 33.2 L239.6 35.3 L236.6 37.4 Z M236.4 39.8 L233.4 41.9 L236.4 44 Z" fill="#404058" shape-rendering="auto"/>
<path d="M242.5 33.5 L242.5 41.5 L244.3 40 L245.8 43.5 L247.2 42.8 L245.8 39.5 L248 39.3 Z" fill="#fff" stroke="#808088" shape-rendering="auto"/>
<path d="M256.5 35.5 V37.5 M258.5 33 V39.5 M259.5 32 V40 M261.5 33 V39.5 M263.5 34 V38.5 M265.5 35 V38 M267.5 35.5 V37.5 M269 36 V37" stroke="#3a4ee0" stroke-width="1" shape-rendering="auto"/>
<path d="M256.5 40.5 H266 V39 L270 42 L266 45 V43.5 H256.5 Z" fill="#4a90e0" stroke="#6040a0" stroke-width="0.8" shape-rendering="auto"/>
<path d="M279 38 L284 38 L281.5 41 Z" fill="#000" shape-rendering="auto"/>
<path d="M304.9 38.6 V37 Q304.9 34.6 306.9 34.6 Q308.9 34.6 308.9 37 V38.6" fill="none" stroke="#505460" stroke-width="1.5" shape-rendering="auto"/>
<rect x="303.5" y="38.6" width="7" height="5.2" rx="1" fill="#9ea2ac" stroke="#50545e" stroke-width="1" shape-rendering="auto"/>
<rect x="306" y="40" width="2" height="2" fill="#3a3e48" />
<rect x="327" y="28" width="22" height="21" fill="url(#checker)"/>
<rect x="327" y="28" width="23" height="1" fill="#808080" />
<rect x="327" y="28" width="1" height="22" fill="#808080" />
<rect x="327" y="49" width="23" height="1" fill="#fff" />
<rect x="349" y="28" width="1" height="22" fill="#fff" />
<rect x="350" y="28" width="12" height="21" fill="#d4d0c8" />
<rect x="350" y="28" width="13" height="1" fill="#808080" />
<rect x="350" y="28" width="1" height="22" fill="#808080" />
<rect x="350" y="49" width="13" height="1" fill="#fff" />
<rect x="362" y="28" width="1" height="22" fill="#fff" />
<path d="M354 38 L359 38 L356.5 41 Z" fill="#000" shape-rendering="auto"/>
<path d="M331 37.3 L333.4 34.3 L337.6 38 L339.9 35.4 L343.6 38.5 L346.1 39.6 V40.8 H343.6 L344.5 43 H331 Z" fill="#a4aaf4" shape-rendering="auto"/>
<path d="M333.4 34.3 L337.6 38 L340.8 40.8 L344 42.4 M331.4 37.3 L334.9 40.5 L336.5 39.4 L339.9 35.4 L343.6 38.5 L346.1 39.6" fill="none" stroke="#2030d0" stroke-width="1.1" shape-rendering="auto"/>
<path d="M343.6 40.6 H346.6 M331.2 43.4 H345.6" fill="none" stroke="#101028" stroke-width="1.2" shape-rendering="auto"/>
<rect x="366" y="34" width="16" height="10" fill="#000"/>
<rect x="367" y="35" width="14" height="8" fill="#40c040"/>
<rect x="371" y="35" width="5" height="1" fill="#a088f4" />
<rect x="377" y="35" width="4" height="1" fill="#a088f4" />
<rect x="368" y="36" width="5" height="1" fill="#a088f4" />
<rect x="369" y="38" width="1" height="1" fill="#a088f4" />
<rect x="376" y="37" width="3" height="1" fill="#a088f4" />
<rect x="375" y="38" width="2" height="1" fill="#a088f4" />
<rect x="375" y="39" width="2" height="1" fill="#a088f4" />
<rect x="380" y="39" width="1" height="1" fill="#a088f4" />
<rect x="371" y="40" width="4" height="1" fill="#a088f4" />
<rect x="377" y="40" width="2" height="1" fill="#a088f4" />
<rect x="367" y="41" width="3" height="1" fill="#a088f4" />
<rect x="379" y="41" width="2" height="1" fill="#a088f4" />
<rect x="375" y="42" width="2" height="1" fill="#a088f4" />
<path d="M390 38 L395 38 L392.5 41 Z" fill="#000" shape-rendering="auto"/>
<circle cx="417.5" cy="39.5" r="5.5" fill="none" stroke="#8088e8" stroke-width="1.8" shape-rendering="auto"/>
<path d="M413.8 35.8 L421.2 43.2" stroke="#8088e8" stroke-width="1.8" shape-rendering="auto"/>
<path d="M563.8 40.5 L567.5 37 L567.5 40 L563.8 43.8 Z" fill="#c86078" shape-rendering="auto"/>
<path d="M567.5 37 L571 34 L571 37 L567.5 40 Z" fill="#c4c8d8" shape-rendering="auto"/>
<path d="M557 40.5 L561 37 L567.5 37 L563.8 40.5 Z" fill="#e8a4b4" stroke="#c06080" stroke-width="0.6" shape-rendering="auto"/>
<path d="M561 37 L564 34.2 L571 34.2 L567.5 37 Z" fill="#fcfcfc" stroke="#c8ccd8" stroke-width="0.6" shape-rendering="auto"/>
<rect x="557" y="40.5" width="6.8" height="3.3" fill="#e494a4" stroke="#b84a68" stroke-width="0.8" shape-rendering="auto"/>
<path d="M591.5 32.5 H600.5 L599 38 H589.5 Z" fill="#f4f4f4" stroke="#303030" shape-rendering="auto"/>
<rect x="592" y="34" width="6" height="1" fill="#202020" />
<rect x="591" y="36" width="6" height="1" fill="#202020" />
<path d="M588 38 H601 L603 40 V45 L601 46 H588 L587 45 V39 Z" fill="#101010" shape-rendering="auto"/>
<rect x="589" y="39" width="1" height="1" fill="#e8e8e8" />
<rect x="589" y="44" width="1" height="1" fill="#d0d0d0" />
<rect x="591" y="39" width="1" height="1" fill="#e8e8e8" />
<rect x="591" y="44" width="1" height="1" fill="#d0d0d0" />
<rect x="593" y="39" width="1" height="1" fill="#e8e8e8" />
<rect x="593" y="44" width="1" height="1" fill="#d0d0d0" />
<rect x="595" y="39" width="1" height="1" fill="#e8e8e8" />
<rect x="595" y="44" width="1" height="1" fill="#d0d0d0" />
<rect x="597" y="39" width="1" height="1" fill="#e8e8e8" />
<rect x="597" y="44" width="1" height="1" fill="#d0d0d0" />
<rect x="599" y="39" width="1" height="1" fill="#e8e8e8" />
<rect x="599" y="44" width="1" height="1" fill="#d0d0d0" />
<path d="M589 42 Q590.5 40.8 592 42 Q593.5 40.8 595 42 Q596.5 40.8 598 42" fill="none" stroke="#e8e8e8" stroke-width="1.2" shape-rendering="auto"/>
<rect x="601" y="39" width="1" height="1" fill="#b0b0b0" />
<rect x="600" y="41" width="1" height="1" fill="#b0b0b0" />
<rect x="602" y="41" width="1" height="1" fill="#b0b0b0" />
<rect x="601" y="43" width="1" height="1" fill="#b0b0b0" />
<rect x="600" y="45" width="1" height="1" fill="#b0b0b0" />
<rect x="602" y="44" width="1" height="1" fill="#b0b0b0" />
<path d="M689.9 49.6 V48 Q689.9 45.6 691.9 45.6 Q693.9 45.6 693.9 48 V49.6" fill="none" stroke="#505460" stroke-width="1.5" shape-rendering="auto"/>
<rect x="688.5" y="49.6" width="7" height="5.2" rx="1" fill="#9ea2ac" stroke="#50545e" stroke-width="1" shape-rendering="auto"/>
<rect x="691" y="51" width="2" height="2" fill="#3a3e48" />
<path d="M707 50.5 H723" stroke="#38b8d8" stroke-width="1.2" shape-rendering="auto"/>
<path d="M709.5 50.5 L710.5 46 L711.5 54.5 L712.5 45 L713.5 55.5 L714.5 47 L715.5 53 L716.5 49" fill="none" stroke="#7080d8" stroke-width="1" shape-rendering="auto"/>
<path d="M714.5 44 H720.5 M714.5 56 H720.5 M717.5 44 V56" stroke="#404450" stroke-width="1.3" shape-rendering="auto"/>
<rect x="690" y="740" width="2.5" height="12" fill="url(#tg)" shape-rendering="auto"/>
<path d="M702 740 L702 752 L693 746 Z" fill="url(#tg)" shape-rendering="auto"/>
<path d="M714 740 L714 752 L723 746 Z" fill="url(#tg)" shape-rendering="auto"/>
<rect x="723" y="740" width="2.5" height="12" fill="url(#tg)" shape-rendering="auto"/>
<rect x="738.5" y="739.5" width="12" height="12" fill="url(#tg2)" stroke="#6a6e76" shape-rendering="auto"/>
<path d="M761 739 L775 746 L761 752 Z" fill="url(#tg)" stroke="#505458" stroke-width="0.8" shape-rendering="auto"/>
<rect x="767" y="753" width="9" height="1" fill="#303030" />
<rect x="768" y="754" width="7" height="1" fill="#909090" />
<path d="M786 746 H798" stroke="#20a070" stroke-width="1.2" shape-rendering="auto"/>
<circle cx="786" cy="746" r="2" fill="#40c090" stroke="#208060" stroke-width="0.8" shape-rendering="auto"/>
<circle cx="798" cy="746" r="2" fill="#40c090" stroke="#208060" stroke-width="0.8" shape-rendering="auto"/>
<rect x="790" y="741.5" width="4.5" height="9" fill="#40c090" stroke="#208060" stroke-width="0.8" shape-rendering="auto"/>
<rect x="896" y="741" width="51" height="1" fill="#606060" />
<rect x="896" y="742" width="51" height="1" fill="#fff" />
<path d="M908 741 L918 735 L918 747 Z M918 741 L922.5 735 L927 741 L922.5 747 Z M927 735 L933 741 L927 747 Z" fill="#8c9098" stroke="#6a6e74" stroke-width="0.8" shape-rendering="auto"/>
<path d="M921 756 L925 748 L929 756 Z" fill="#d08a40" shape-rendering="auto"/>
<rect x="454" y="77" width="110" height="17" fill="#000" />
<rect x="455" y="78" width="108" height="15" fill="#ffffe1" />
</svg>
<div class="t" style="right:1227px;top:69px;color:#000;font-size:10px;word-spacing:1.5px;letter-spacing:-0.7px;">0</div>
<div class="t" style="right:1227px;top:114px;color:#000;font-size:10px;word-spacing:1.5px;letter-spacing:-0.7px;">-30</div>
<div class="t" style="right:1227px;top:159px;color:#000;font-size:10px;word-spacing:1.5px;letter-spacing:-0.7px;">-60</div>
<div class="t" style="right:1227px;top:203px;color:#000;font-size:10px;word-spacing:1.5px;letter-spacing:-0.7px;">-90</div>
<div class="t" style="right:1227px;top:248px;color:#000;font-size:10px;word-spacing:1.5px;letter-spacing:-0.7px;">-120</div>
<div class="t" style="right:1227px;top:293px;color:#000;font-size:10px;word-spacing:1.5px;letter-spacing:-0.7px;">dB -150</div>
<div class="t" style="left:-44px;width:200px;text-align:center;top:304px;color:#000;font-size:10px;word-spacing:1.5px;letter-spacing:-0.7px;">956</div>
<div class="t" style="left:65px;width:200px;text-align:center;top:304px;color:#000;font-size:10px;word-spacing:1.5px;letter-spacing:-0.7px;">2 000</div>
<div class="t" style="left:168px;width:200px;text-align:center;top:304px;color:#000;font-size:10px;word-spacing:1.5px;letter-spacing:-0.7px;">4 000</div>
<div class="t" style="left:304px;width:200px;text-align:center;top:304px;color:#000;font-size:10px;word-spacing:1.5px;letter-spacing:-0.7px;">10 000</div>
<div class="t" style="left:406px;width:200px;text-align:center;top:304px;color:#000;font-size:10px;word-spacing:1.5px;letter-spacing:-0.7px;">20 000</div>
<div class="t" style="left:536px;width:200px;text-align:center;top:304px;color:#000;font-size:10px;word-spacing:1.5px;letter-spacing:-0.7px;">48 000</div>
<div class="t" style="left:655px;top:304px;color:#000;font-size:10px;">Hz</div>
<div class="t" style="left:638px;top:74px;color:#000;font-size:10px;letter-spacing:-0.2px;">Left</div>
<div class="t" style="right:1227px;top:357px;color:#000;font-size:10px;word-spacing:1.5px;letter-spacing:-0.7px;">0</div>
<div class="t" style="right:1227px;top:402px;color:#000;font-size:10px;word-spacing:1.5px;letter-spacing:-0.7px;">-30</div>
<div class="t" style="right:1227px;top:447px;color:#000;font-size:10px;word-spacing:1.5px;letter-spacing:-0.7px;">-60</div>
<div class="t" style="right:1227px;top:491px;color:#000;font-size:10px;word-spacing:1.5px;letter-spacing:-0.7px;">-90</div>
<div class="t" style="right:1227px;top:536px;color:#000;font-size:10px;word-spacing:1.5px;letter-spacing:-0.7px;">-120</div>
<div class="t" style="right:1227px;top:581px;color:#000;font-size:10px;word-spacing:1.5px;letter-spacing:-0.7px;">dB -150</div>
<div class="t" style="left:-44px;width:200px;text-align:center;top:592px;color:#000;font-size:10px;word-spacing:1.5px;letter-spacing:-0.7px;">6 769</div>
<div class="t" style="left:23px;width:200px;text-align:center;top:592px;color:#000;font-size:10px;word-spacing:1.5px;letter-spacing:-0.7px;">8 000</div>
<div class="t" style="left:113px;width:200px;text-align:center;top:592px;color:#000;font-size:10px;word-spacing:1.5px;letter-spacing:-0.7px;">10 000</div>
<div class="t" style="left:276px;width:200px;text-align:center;top:592px;color:#000;font-size:10px;word-spacing:1.5px;letter-spacing:-0.7px;">15 000</div>
<div class="t" style="left:392px;width:200px;text-align:center;top:592px;color:#000;font-size:10px;word-spacing:1.5px;letter-spacing:-0.7px;">20 000</div>
<div class="t" style="left:536px;width:200px;text-align:center;top:592px;color:#000;font-size:10px;word-spacing:1.5px;letter-spacing:-0.7px;">28 568</div>
<div class="t" style="left:655px;top:592px;color:#000;font-size:10px;">Hz</div>
<div class="t" style="left:638px;top:362px;color:#000;font-size:10px;letter-spacing:-0.2px;">Right</div>
<div class="t" style="left:4px;top:643px;color:#000;font-size:11px;letter-spacing:-0.15px;">Frequency (Hz):</div>
<div class="t" style="right:1105px;top:643px;color:#006828;font-size:11px;word-spacing:1px;letter-spacing:-0.25px;">13 984</div>
<div class="t" style="left:4px;top:656px;color:#000;font-size:11px;letter-spacing:-0.15px;">Decibels (dB):</div>
<div class="t" style="right:1105px;top:656px;color:#006828;font-size:11px;word-spacing:1px;letter-spacing:-0.25px;">-22 (-12)</div>
<div class="t" style="left:4px;top:669px;color:#000;font-size:11px;letter-spacing:-0.15px;">FFT Bin:</div>
<div class="t" style="right:1105px;top:669px;color:#006828;font-size:11px;word-spacing:1px;letter-spacing:-0.25px;">1 193</div>
<div class="t" style="left:4px;top:682px;color:#000;font-size:11px;letter-spacing:-0.15px;">Peak:</div>
<div class="t" style="right:1105px;top:682px;color:#006828;font-size:11px;word-spacing:1px;letter-spacing:-0.25px;">-13 dB at 14 007 Hz</div>
<div class="t" style="left:206px;width:200px;text-align:center;top:641px;color:#000;font-size:11px;letter-spacing:-0.2px;">File</div>
<div class="t" style="left:293px;width:200px;text-align:center;top:641px;color:#000;font-size:11px;letter-spacing:-0.2px;">Start</div>
<div class="t" style="left:365px;width:200px;text-align:center;top:641px;color:#000;font-size:11px;letter-spacing:-0.2px;">End</div>
<div class="t" style="left:485px;width:200px;text-align:center;top:641px;color:#000;font-size:11px;letter-spacing:-0.2px;">Settings</div>
<div class="t" style="left:180px;top:657px;color:#000;font-size:11px;letter-spacing:-0.1px;">Active:</div>
<div class="t" style="left:258px;top:657px;color:#000;font-size:11px;letter-spacing:-0.1px;">Sound 2</div>
<div class="t" style="left:359px;top:657px;color:#000;font-size:11px;letter-spacing:0px;">00:00:00,000</div>
<div class="t" style="left:431px;top:657px;color:#000;font-size:11px;letter-spacing:0px;">00:00:01,000</div>
<div class="t" style="left:485px;width:200px;text-align:center;top:657px;color:#000;font-size:11px;letter-spacing:-0.3px;">8 192, Blackman-Harris;75%</div>
<div class="t" style="left:180px;top:673px;color:#000;font-size:11px;letter-spacing:-0.1px;">Snapshot #1:</div>
<div class="t" style="left:180px;top:689px;color:#000;font-size:11px;letter-spacing:-0.1px;">Snapshot #2:</div>
<div class="t" style="left:180px;top:705px;color:#000;font-size:11px;letter-spacing:-0.1px;">Snapshot #3:</div>
<div class="t" style="left:180px;top:721px;color:#000;font-size:11px;letter-spacing:-0.1px;">Snapshot #4:</div>
<div class="t" style="left:731px;top:48px;color:#000;font-size:10px;letter-spacing:-0.45px;">00:00:00,000</div>
<div class="t" style="right:552px;top:99px;color:#000;font-size:10px;letter-spacing:-0.1px;">-2,5</div>
<div class="t" style="right:552px;top:139px;color:#000;font-size:10px;letter-spacing:-0.1px;">-6,0</div>
<div class="t" style="right:552px;top:180px;color:#000;font-size:10px;letter-spacing:-0.1px;">-12,0</div>
<div class="t" style="right:552px;top:220px;color:#000;font-size:10px;letter-spacing:-0.1px;">-Inf.</div>
<div class="t" style="right:552px;top:261px;color:#000;font-size:10px;letter-spacing:-0.1px;">-12,0</div>
<div class="t" style="right:552px;top:301px;color:#000;font-size:10px;letter-spacing:-0.1px;">-6,0</div>
<div class="t" style="right:552px;top:341px;color:#000;font-size:10px;letter-spacing:-0.1px;">-2,5</div>
<div class="t" style="left:595px;width:200px;text-align:center;top:67px;color:#fff;font-size:11px;">1</div>
<div class="t" style="right:552px;top:426px;color:#000;font-size:10px;letter-spacing:-0.1px;">-2,5</div>
<div class="t" style="right:552px;top:466px;color:#000;font-size:10px;letter-spacing:-0.1px;">-6,0</div>
<div class="t" style="right:552px;top:507px;color:#000;font-size:10px;letter-spacing:-0.1px;">-12,0</div>
<div class="t" style="right:552px;top:547px;color:#000;font-size:10px;letter-spacing:-0.1px;">-Inf.</div>
<div class="t" style="right:552px;top:588px;color:#000;font-size:10px;letter-spacing:-0.1px;">-12,0</div>
<div class="t" style="right:552px;top:628px;color:#000;font-size:10px;letter-spacing:-0.1px;">-6,0</div>
<div class="t" style="right:552px;top:668px;color:#000;font-size:10px;letter-spacing:-0.1px;">-2,5</div>
<div class="t" style="left:595px;width:200px;text-align:center;top:394px;color:#fff;font-size:11px;">2</div>
<div class="t" style="left:815px;top:736px;color:#000;font-size:11px;letter-spacing:-0.2px;">Rate: 0,00</div>
<div style="position:absolute;left:971px;top:739px;width:70px;height:15px;overflow:hidden"><div class="t" style="right:1px;top:1px;letter-spacing:0.35px">773:56:26,240</div></div>
<div style="position:absolute;left:1046px;top:739px;width:70px;height:15px;overflow:hidden"><div class="t" style="right:1px;top:1px;letter-spacing:0.35px">364:07:29,878</div></div>
<div style="position:absolute;left:1121px;top:739px;width:70px;height:15px;overflow:hidden"><div class="t" style="right:1px;top:1px;letter-spacing:0.35px">090:11:03,638</div></div>
<div class="t" style="right:10px;top:740px;color:#000;font-size:11px;">8:1</div>
<div class="t" style="left:2px;top:767px;color:#000;font-size:11px;letter-spacing:-0.2px;">Processing time (Spectrum Analysis): 0,062 seconds</div>
<div class="t" style="right:103px;top:767px;color:#000;font-size:11px;letter-spacing:-0.2px;">96 000 Hz</div>
<div class="t" style="left:1186px;top:767px;color:#000;font-size:11px;letter-spacing:-0.2px;">16 bit</div>
<div class="t" style="left:1230px;top:767px;color:#000;font-size:11px;letter-spacing:-0.2px;">Stereo</div>
<div class="t" style="left:3px;top:32px;color:#000;font-size:11px;letter-spacing:-0.2px;">8 192</div>
<div class="t" style="left:64px;top:32px;color:#000;font-size:11px;letter-spacing:-0.4px;">Blackman-Harris</div>
<div class="t" style="left:433px;top:33px;color:#000;font-size:10px;transform:scaleX(0.72);transform-origin:0 0;color:#202020;letter-spacing:0px;">SET</div>
<div class="t" style="left:460px;top:33px;color:#000;font-size:13px;font-weight:bold;color:#202020;transform:scaleX(0.9);transform-origin:0 0;">1</div>
<div class="t" style="left:483px;top:33px;color:#000;font-size:13px;font-weight:bold;color:#202020;transform:scaleX(0.9);transform-origin:0 0;">2</div>
<div class="t" style="left:506px;top:33px;color:#000;font-size:13px;font-weight:bold;color:#202020;transform:scaleX(0.9);transform-origin:0 0;">3</div>
<div class="t" style="left:530px;top:33px;color:#000;font-size:13px;font-weight:bold;color:#202020;transform:scaleX(0.9);transform-origin:0 0;">4</div>
<div class="t" style="left:457px;top:80px;color:#000;font-size:11px;letter-spacing:-0.05px;">-12,7 dB at 13 984 Hz</div>
</body></html>
